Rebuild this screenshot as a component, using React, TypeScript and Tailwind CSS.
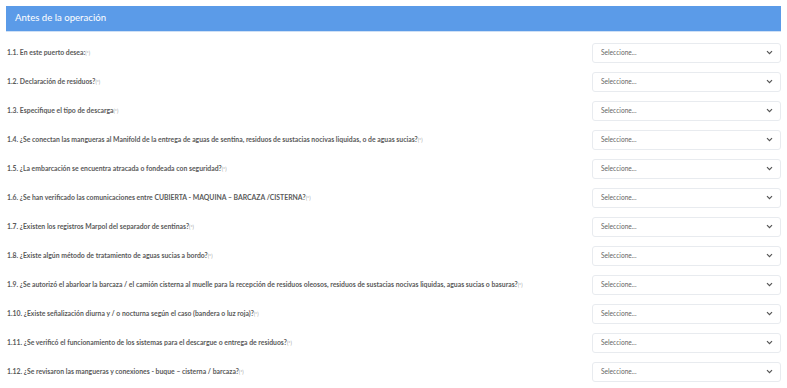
const questions = [
  "1.1. En este puerto desea:",
  "1.2. Declaración de residuos?",
  "1.3. Especifique el tipo de descarga",
  "1.4. ¿Se conectan las mangueras al Manifold de la entrega de aguas de sentina, residuos de sustacias nocivas liquidas, o de aguas sucias?",
  "1.5. ¿La embarcación se encuentra atracada o fondeada con seguridad?",
  "1.6. ¿Se han verificado las comunicaciones entre CUBIERTA - MAQUINA – BARCAZA /CISTERNA?",
  "1.7. ¿Existen los registros Marpol del separador de sentinas?",
  "1.8. ¿Existe algún método de tratamiento de aguas sucias a bordo?",
  "1.9. ¿Se autorizó el abarloar la barcaza / el camión cisterna al muelle para la recepción de residuos oleosos, residuos de sustacias nocivas liquidas, aguas sucias o basuras?",
  "1.10. ¿Existe señalización diurna y / o nocturna según el caso (bandera o luz roja)?",
  "1.11. ¿Se verificó el funcionamiento de los sistemas para el descargue o entrega de residuos?",
  "1.12. ¿Se revisaron las mangueras y conexiones - buque – cisterna / barcaza?",
];

function Chevron() {
  return (
    <svg width="7" height="5" viewBox="0 0 7 5" className="text-[#555]">
      <path d="M1 1.2 L3.5 3.7 L6 1.2" fill="none" stroke="currentColor" strokeWidth="1.2" />
    </svg>
  );
}

export default function App() {
  return (
    <div
      className="w-[787px] h-[388px] overflow-hidden bg-white px-[6px] pt-[6px]"
      style={{ fontFamily: "Lato, 'Open Sans', sans-serif" }}
    >
      <div className="h-[26px] bg-[#5b9be8] flex items-center pl-[9px] text-white text-[9.6px] border-b border-[#cfe0f5]">
        Antes de la operación
      </div>
      <div className="mt-[6px]">
        {questions.map((q) => (
          <div key={q} className="h-[29px] flex items-center justify-between">
            <span className="pl-[1px] text-[6.85px] font-bold text-[#5a5a5a]">
              {q}
              <span className="text-[5px] font-normal text-[#999]">(*)</span>
            </span>
            <div className="w-[189px] h-[20px] border border-[#e8ebef] rounded-[3px] flex items-center justify-between pl-[8px] pr-[7px]">
              <span className="text-[6.6px] text-[#666]">Seleccione...</span>
              <Chevron />
            </div>
          </div>
        ))}
      </div>
    </div>
  );
}
